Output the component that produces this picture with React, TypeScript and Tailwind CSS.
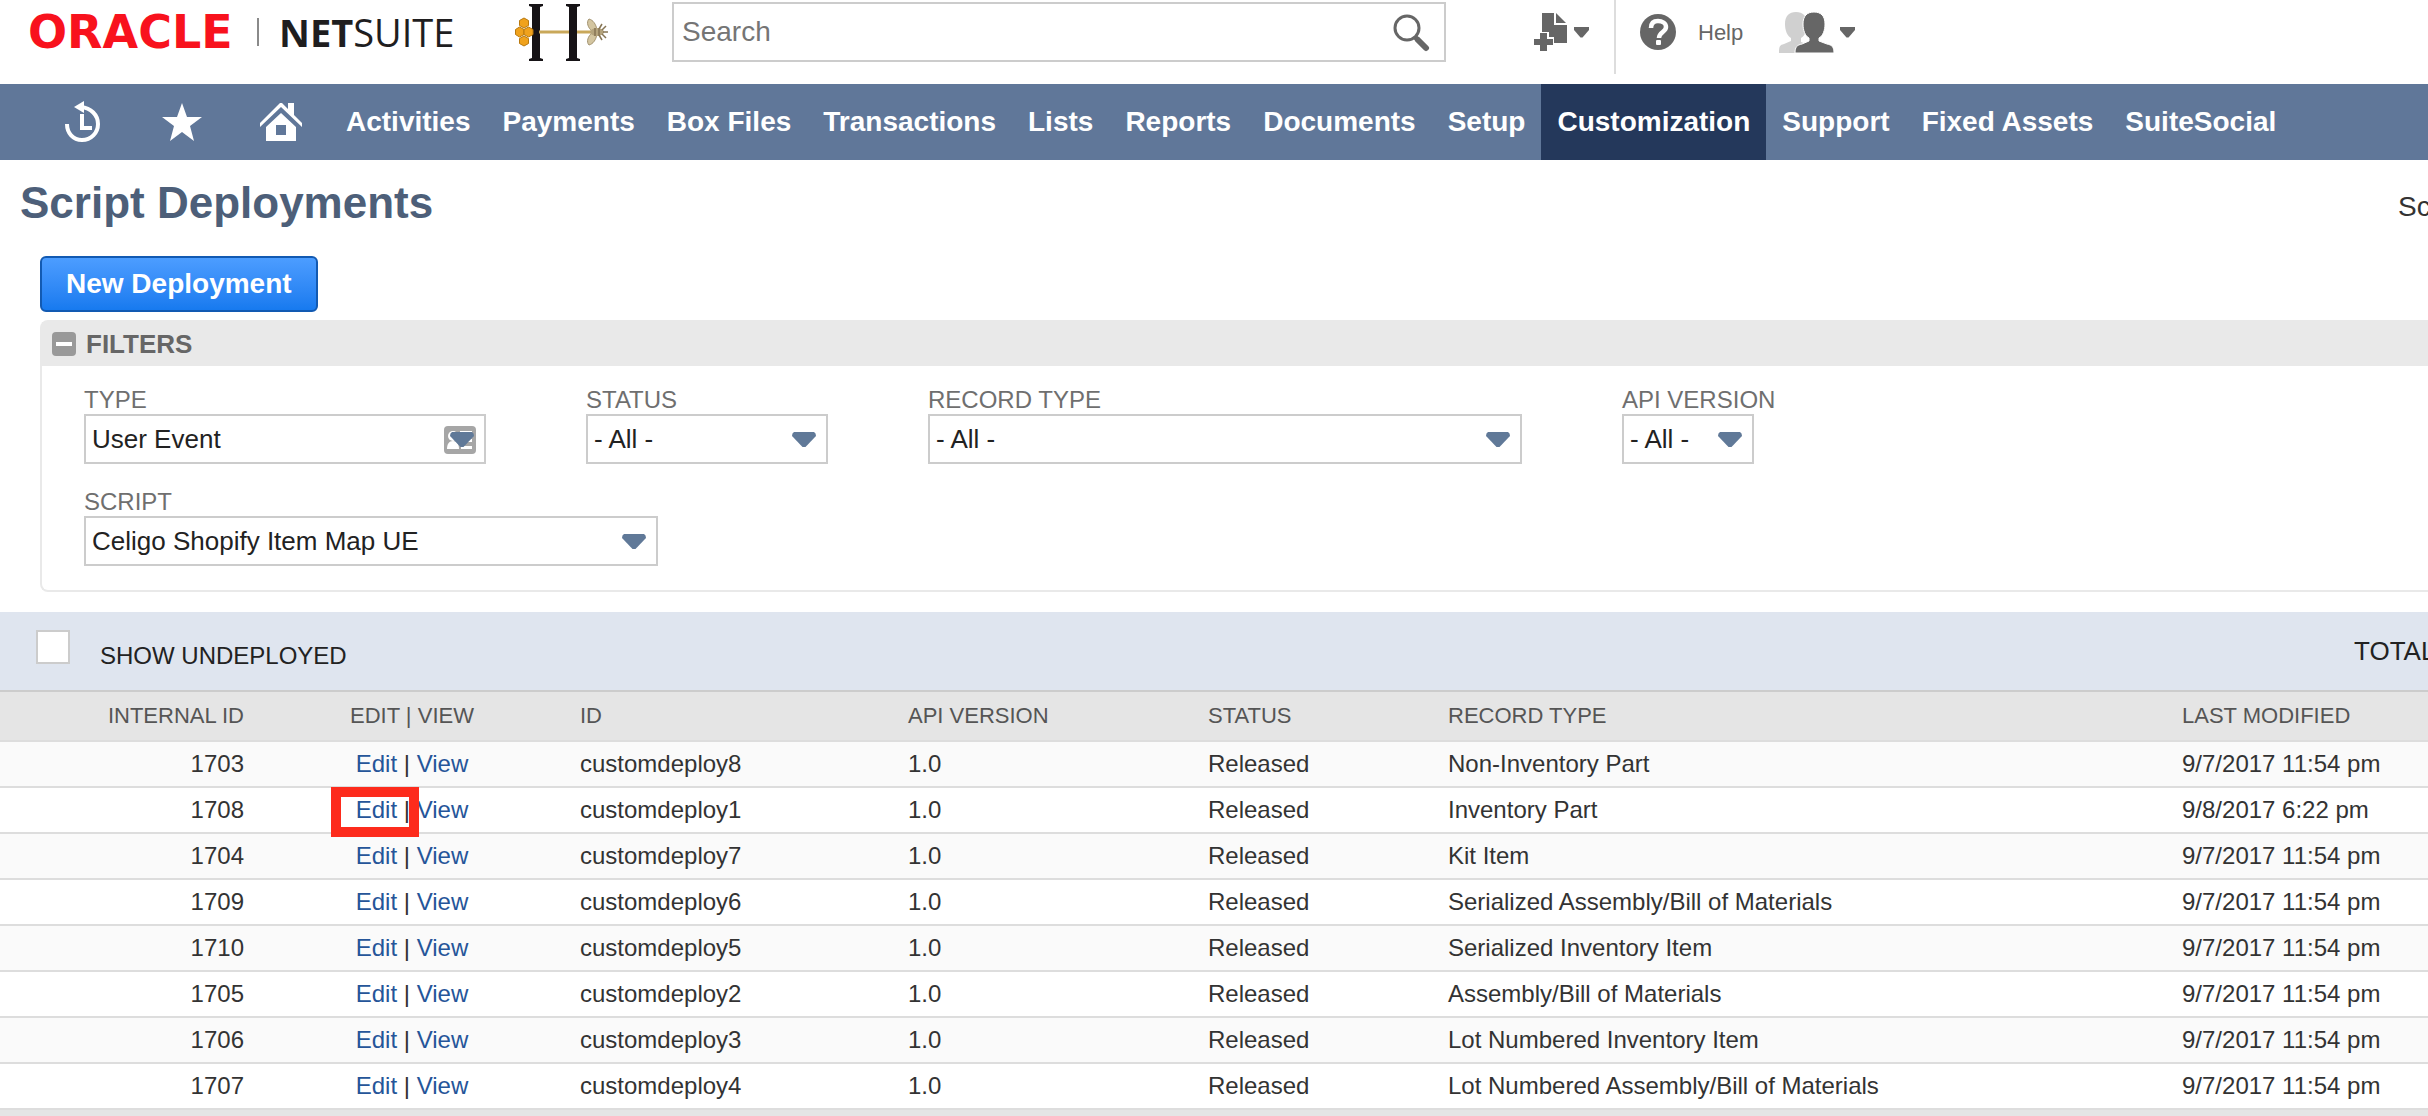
import { useState } from 'react';

interface Deployment {
  internalId: number;
  scriptId: string;
  recordType: string;
  lastModified: string;
}

interface FilterProps {
  id: string;
  label: string;
  value: string;
  width: string;
  card?: boolean;
}

const menu = [
  'Activities',
  'Payments',
  'Box Files',
  'Transactions',
  'Lists',
  'Reports',
  'Documents',
  'Setup',
  'Customization',
  'Support',
  'Fixed Assets',
  'SuiteSocial',
];

const deployments: Deployment[] = [
  { internalId: 1703, scriptId: 'customdeploy8', recordType: 'Non-Inventory Part', lastModified: '9/7/2017 11:54 pm' },
  { internalId: 1708, scriptId: 'customdeploy1', recordType: 'Inventory Part', lastModified: '9/8/2017 6:22 pm' },
  { internalId: 1704, scriptId: 'customdeploy7', recordType: 'Kit Item', lastModified: '9/7/2017 11:54 pm' },
  { internalId: 1709, scriptId: 'customdeploy6', recordType: 'Serialized Assembly/Bill of Materials', lastModified: '9/7/2017 11:54 pm' },
  { internalId: 1710, scriptId: 'customdeploy5', recordType: 'Serialized Inventory Item', lastModified: '9/7/2017 11:54 pm' },
  { internalId: 1705, scriptId: 'customdeploy2', recordType: 'Assembly/Bill of Materials', lastModified: '9/7/2017 11:54 pm' },
  { internalId: 1706, scriptId: 'customdeploy3', recordType: 'Lot Numbered Inventory Item', lastModified: '9/7/2017 11:54 pm' },
  { internalId: 1707, scriptId: 'customdeploy4', recordType: 'Lot Numbered Assembly/Bill of Materials', lastModified: '9/7/2017 11:54 pm' },
];

const highlightedId = 1708;

function Caret() {
  return (
    <svg width="15" height="11" viewBox="0 0 15 11" fill="#666">
      <path d="M0 0h15v3L8.500 10.500h-2L0 3z" />
    </svg>
  );
}

function CompanyLogo() {
  return (
    <svg width="96" height="60" viewBox="0 0 96 60" className="ml-[59px] shrink-0">
      <g fill="#161316">
        <path d="M14 2h14v2l-3 1v51l3 1v2H14v-2l3-1V5l-3-1z" />
        <path d="M51 2h14v2l-3 1v51l3 1v2H51v-2l3-1V5l-3-1z" />
      </g>
      <path d="M24 30h54" stroke="#c9a85a" strokeWidth="3" />
      <path d="M54 30h8" stroke="#161316" strokeWidth="4" />
      <g fill="#f0a21c" stroke="#b9790f" strokeWidth="1">
        <path d="M9 16l4.500 2.500v5L9 26l-4.500-2.500v-5z" />
        <path d="M4.500 25L9 27.500v5L4.500 35 0.500 32.500v-5z" />
        <path d="M13.500 25L18 27.500v5L13.500 35 9 32.500v-5z" />
        <path d="M9 34l4.500 2.500v5L9 44l-4.500-2.500v-5z" />
      </g>
      <g fill="#d3c5a0" stroke="#a39370" strokeWidth="1">
        <path d="M82 28c-1-6-4-10-8-11-3 3-1 9 3 12z" />
        <path d="M82 32c-1 6-4 10-8 11-3-3-1-9 3-12z" />
      </g>
      <ellipse cx="82" cy="30" rx="7" ry="4" fill="#b4a37c" />
      <path d="M80 26v8M84 26v8M84 27l3-5M84 33l3 5M87 28l4-4M87 32l4 4M88 30h5" stroke="#857453" strokeWidth="1.500" fill="none" />
    </svg>
  );
}

function NewDocumentIcon() {
  return (
    <svg width="34" height="38" viewBox="0 0 34 38" fill="#666">
      <path d="M8 0h12v12h13v18H20v-6h-5v-5H8z" />
      <path d="M22 0l10 10H22z" />
      <path d="M6 20h7v6h6v6h-6v6H6v-6H0v-6h6z" />
    </svg>
  );
}

function UsersIcon() {
  return (
    <svg width="55" height="42" viewBox="0 0 55 42">
      <path d="M6 13C6 5 10 1 17 1s11 4 11 12c0 6-2 12-6 14v4l8 3v8H0c0-7 1-8 5-9l7-3v-3c-4-2-6-8-6-14z" fill="#d0d0d0" />
      <path
        d="M24 13c0-8 4-12 11-12s11 4 11 12c0 6-2 12-6 14v3l8 3c5 1 7 3 7 9H16c0-6 2-8 7-9l7-3v-3c-4-2-6-8-6-14z"
        fill="#666"
        stroke="#fff"
        strokeWidth="1"
      />
    </svg>
  );
}

function Filter({ id, label, value, width, card }: FilterProps) {
  return (
    <div className={width}>
      <label htmlFor={id} className="block whitespace-nowrap text-2xl leading-7 text-[#6f6f6f]">
        {label}
      </label>
      <div className="relative">
        <select
          id={id}
          className="block h-[50px] w-full appearance-none border-2 border-[#ccc] bg-white pl-1.5 text-[26px] leading-8 text-[#222]"
        >
          <option>{value}</option>
        </select>
        {card && (
          <svg width="32" height="28" viewBox="0 0 32 28" className="pointer-events-none absolute right-2.5 top-3">
            <rect width="32" height="28" rx="4" fill="#a6a6a6" />
            <circle cx="9" cy="10" r="5" fill="#fff" />
            <path d="M3 23c0-5 2-8 6-8s6 3 6 8zM16 5h12v4H16zM17 13h11v3H17zM17 20h11v3H17z" fill="#fff" />
          </svg>
        )}
        <svg width="24" height="17" viewBox="0 0 24 17" className="pointer-events-none absolute right-3 top-[17px]">
          <path d="M2 1h20q2 1 2 4L13.500 16h-3L0 5q0-3 2-4z" fill="#607998" />
        </svg>
      </div>
    </div>
  );
}

export default function App() {
  const [showUndeployed, setShowUndeployed] = useState(false);

  return (
    <div className="overflow-hidden bg-white font-['Liberation_Sans',Arial,sans-serif] text-[#333]">
      <header className="flex h-[84px] items-center pb-5">
        <a href="#" className="ml-7 flex w-[428px] shrink-0 items-center">
          <span className="w-[229px] font-['DejaVu_Sans',sans-serif] text-[46px] leading-none font-bold text-[#f8121d]">
            ORACLE
          </span>
          <span className="h-7 w-[2px] bg-[#8a8a8a]"></span>
          <span className="ml-5 font-['Open_Sans',sans-serif] text-[38px] leading-none text-[#1f1e1f]">
            <b>NET</b>SUITE
          </span>
        </a>
        <CompanyLogo />

        <div className="relative ml-[61px] w-[774px] shrink-0">
          <input
            type="text"
            aria-label="Search"
            placeholder="Search"
            className="block h-[60px] w-full border-2 border-[#ccc] pl-2 text-[28px] placeholder:text-[#757575]"
          />
          <svg width="38" height="38" viewBox="0 0 38 38" className="absolute right-4 top-3" fill="none" stroke="#666">
            <circle cx="15" cy="14" r="12" strokeWidth="3" />
            <path d="M23 23l3 3" strokeWidth="5" />
            <path d="M26 26l8 8" strokeWidth="6" strokeLinecap="round" />
          </svg>
        </div>

        <button aria-label="Create new" className="ml-22 flex items-center gap-1.5">
          <NewDocumentIcon />
          <Caret />
        </button>
        <div className="ml-[25px] h-[74px] w-[2px] self-start bg-[#ddd]"></div>
        <a href="#" className="ml-6 flex items-center gap-[22px] text-[22px] text-[#666]">
          <svg width="36" height="36" viewBox="0 0 36 36">
            <circle cx="18" cy="18" r="18" fill="#666" />
            <path d="M11 14c0-5 3-7 7-7s8 2 8 6c0 5-7 5-7 11" fill="none" stroke="#fff" strokeWidth="4.500" />
            <rect x="16" y="26" width="5" height="5" rx="1" fill="#fff" />
          </svg>
          Help
        </a>
        <button aria-label="Change role" className="ml-9 flex items-center gap-1.5">
          <UsersIcon />
          <Caret />
        </button>
      </header>

      <nav className="flex h-[76px] items-stretch bg-[#607799] pl-[33px] text-[28px] font-bold text-white">
        <button aria-label="Recent records" className="flex w-[99px] items-center justify-center">
          <svg width="38" height="42" viewBox="0 0 38 42" fill="none" stroke="#fff" strokeWidth="4">
            <path d="M3 23c0 9 6 16 15 16s16-7 16-16S27 7 17 6" />
            <path d="M18 13v14h10" />
            <path d="M10 6l10-6v12z" fill="#fff" stroke="none" />
          </svg>
        </button>
        <button aria-label="Shortcuts" className="flex w-[99px] items-center justify-center">
          <svg width="40" height="38" viewBox="0 0 40 38" fill="#fff">
            <path d="M20 0l5 14h15L28 23l4 15-12-9-12 9 4-15L0 14h15z" />
          </svg>
        </button>
        <button aria-label="Home" className="flex w-[99px] items-center justify-center">
          <svg width="42" height="38" viewBox="0 0 42 38" fill="#fff">
            <path d="M0 20L20 0h2l6 6V0h6v12l8 8v4L21 4 0 24z" />
            <path fillRule="evenodd" d="M6 24L21 10l15 14v14H6zM16 22v10h10V22z" />
          </svg>
        </button>
        {menu.map((item) => (
          <a
            key={item}
            href="#"
            className={`flex items-center whitespace-nowrap px-4 ${item === 'Customization' ? 'bg-[#24385b]' : ''}`}
          >
            {item}
          </a>
        ))}
      </nav>

      <div className="flex items-end justify-between pl-5 pt-[17px]">
        <h1 className="text-[44px] leading-[52px] font-bold text-[#4d5f79]">Script Deployments</h1>
        <div className="w-[30px] overflow-hidden text-[28px] leading-[44px]">Sc</div>
      </div>

      <button className="ml-10 mt-[27px] block h-14 rounded-md border-2 border-[#125ab2] bg-linear-to-b from-[#4c9dff] to-[#167aef] px-6 text-[28px] leading-8 font-bold text-white">
        New Deployment
      </button>

      <section className="ml-10 mt-2 rounded-l-lg border-2 border-r-0 border-[#e9e9e9]">
        <h2 className="flex h-11 items-center gap-2.5 bg-[#e9e9e9] pl-2.5 text-[26px] font-bold text-[#666]">
          <button aria-label="Collapse filters" className="flex h-6 w-6 items-center justify-center rounded-sm bg-[#999]">
            <span className="h-1 w-4 bg-white"></span>
          </button>
          FILTERS
        </h2>
        <div className="flex flex-col gap-6 pb-6 pl-[42px] pt-5">
          <div className="flex gap-[100px]">
            <Filter id="type" label="TYPE" value="User Event" width="w-[402px]" card />
            <Filter id="status" label="STATUS" value="- All -" width="w-[242px]" />
            <Filter id="record-type" label="RECORD TYPE" value="- All -" width="w-[594px]" />
            <Filter id="api-version" label="API VERSION" value="- All -" width="w-[132px]" />
          </div>
          <Filter id="script" label="SCRIPT" value="Celigo Shopify Item Map UE" width="w-[574px]" />
        </div>
      </section>

      <div className="mt-5 flex h-[78px] items-start bg-[#dfe5ef] pl-9 pt-[18px] text-[#222]">
        <input
          id="show-undeployed"
          type="checkbox"
          checked={showUndeployed}
          onChange={(e) => setShowUndeployed(e.target.checked)}
          className="h-[34px] w-[34px] appearance-none border-2 border-[#ccc] bg-white checked:bg-[#607799]"
        />
        <label htmlFor="show-undeployed" className="ml-[30px] mt-3 text-2xl leading-7">
          SHOW UNDEPLOYED
        </label>
        <div className="ml-auto w-[74px] overflow-hidden text-[26px] leading-[42px]">TOTAL</div>
      </div>

      <table className="w-full table-fixed border-separate border-spacing-0 text-left text-2xl">
        <thead>
          <tr className="h-[52px] bg-[#e5e5e5] text-[22px] text-[#555] *:border-t-2 *:border-b-2 *:border-t-[#ccc] *:border-b-[#ddd] *:px-3 *:py-0 *:font-normal">
            <th className="w-[256px] text-right">INTERNAL ID</th>
            <th className="w-[312px] text-center">EDIT | VIEW</th>
            <th className="w-[328px]">ID</th>
            <th className="w-[300px]">API VERSION</th>
            <th className="w-[240px]">STATUS</th>
            <th>RECORD TYPE</th>
            <th className="w-[258px]">LAST MODIFIED</th>
          </tr>
        </thead>
        <tbody>
          {deployments.map((d) => (
            <tr
              key={d.internalId}
              className="h-[46px] odd:bg-[#fafafa] *:border-b-2 *:border-[#ddd] *:px-3 *:py-0 *:whitespace-nowrap"
            >
              <td className="text-right">{d.internalId}</td>
              <td className="relative text-center">
                <a href="#" className="text-[#255599]">Edit</a> | <a href="#" className="text-[#255599]">View</a>
                {d.internalId === highlightedId && (
                  <div className="pointer-events-none absolute -top-px left-[75px] h-[50px] w-[88px] border-10 border-[#fd2b1c]"></div>
                )}
              </td>
              <td>{d.scriptId}</td>
              <td>1.0</td>
              <td>Released</td>
              <td>{d.recordType}</td>
              <td>{d.lastModified}</td>
            </tr>
          ))}
        </tbody>
      </table>
      <div className="h-1.5 bg-[#e5e5e5]"></div>
    </div>
  );
}
